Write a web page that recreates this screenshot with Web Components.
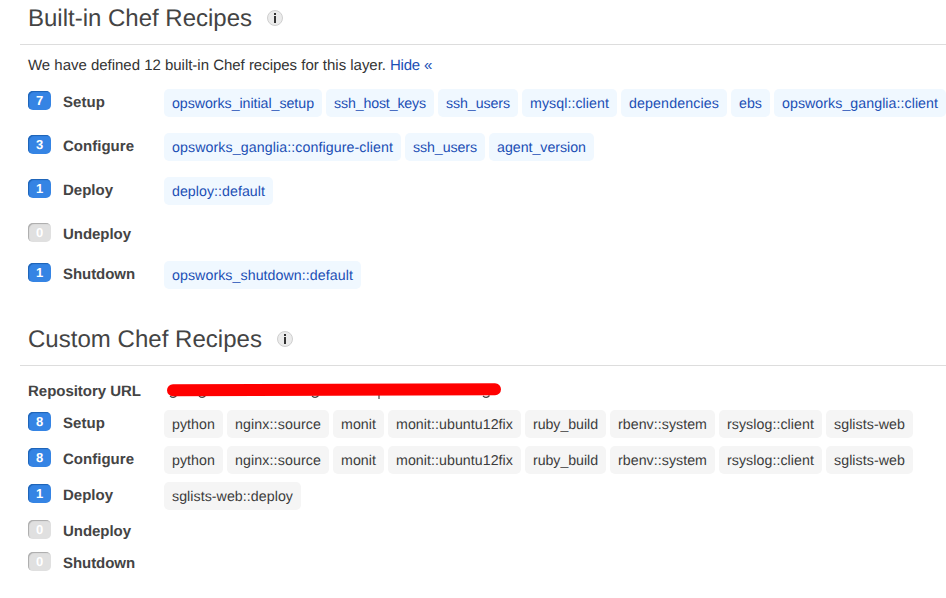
<!DOCTYPE html>
<html lang="en">
<head>
<meta charset="utf-8">
<title>Chef Recipes</title>
<style>
html, body { margin: 0; background: #fff; }
body { width: 946px; height: 598px; overflow: hidden; font-family: "Liberation Sans", Arial, sans-serif; color: #444; text-rendering: geometricPrecision; }
</style>
</head>
<body>
<recipes-page></recipes-page>
<script>
/* Text run that tracks itself out to an exact width. */
class FitText extends HTMLElement {
  connectedCallback() {
    const root = this.attachShadow({ mode: 'open' });
    root.innerHTML = '<style>:host{display:inline-block;white-space:pre}span{display:inline-block}</style><span><slot></slot></span>';
    const width = Number(this.getAttribute('width'));
    const span = root.querySelector('span');
    const count = this.textContent.length;
    this.style.width = width + 'px';
    span.style.letterSpacing = (width - span.getBoundingClientRect().width) / count + 'px';
  }
}
customElements.define('fit-text', FitText);

class InfoIcon extends HTMLElement {
  connectedCallback() {
    this.attachShadow({ mode: 'open' }).innerHTML = `
      <style>:host{display:block;width:16px;height:16px}svg{display:block}</style>
      <svg width="16" height="16" viewBox="0 0 16 16">
        <circle cx="8" cy="8" r="7.5" fill="#ebebeb" stroke="#cfcfcf"/>
        <path d="M7 3h2v2H7zM7 6h2v7H7z" fill="#333"/>
      </svg>`;
  }
}
customElements.define('info-icon', InfoIcon);

class SectionTitle extends HTMLElement {
  connectedCallback() {
    this.attachShadow({ mode: 'open' }).innerHTML = `
      <style>
        :host{display:flex;box-sizing:border-box;height:45px;margin-left:20px;padding:0 0 0 8px;border-bottom:1px solid #ddd;gap:15px;font-size:24px;line-height:38px;color:#444}
        info-icon{margin-top:10px}
      </style>
      <fit-text width="${this.getAttribute('width')}">${this.getAttribute('text')}</fit-text><info-icon></info-icon>`;
  }
}
customElements.define('section-title', SectionTitle);

class CountBadge extends HTMLElement {
  connectedCallback() {
    this.attachShadow({ mode: 'open' }).innerHTML = `
      <style>
        :host{display:block;box-sizing:border-box;width:23px;height:19px;border-radius:5px;background:#3584e4;box-shadow:inset 1px 1px 1px #1d62b4;color:#fff;font:bold 13px/19px "Liberation Sans",Arial,sans-serif;text-align:center}
        :host([empty]){background:#e0e0e0;box-shadow:inset 1px 1px 1px #aaa}
      </style><slot></slot>`;
  }
}
customElements.define('count-badge', CountBadge);

class RecipeChip extends HTMLElement {
  connectedCallback() {
    this.attachShadow({ mode: 'open' }).innerHTML = `
      <style>
        :host{display:block;box-sizing:border-box;flex:none;height:28px;padding:0 8px;border-radius:5px;background:var(--chip-bg);color:var(--chip-fg);font-size:14.2px;line-height:30px}
      </style>
      <fit-text width="${this.getAttribute('width') - 16}">${this.getAttribute('name')}</fit-text>`;
  }
}
customElements.define('recipe-chip', RecipeChip);

class RecipeRow extends HTMLElement {
  connectedCallback() {
    const n = this.getAttribute('count');
    this.attachShadow({ mode: 'open' }).innerHTML = `
      <style>
        :host{display:grid;grid-template-columns:35px 101px auto;padding-left:28px;align-items:start}
        count-badge{margin-top:2px}
        .label{font-weight:bold;font-size:15px;line-height:28px;color:#444}
        .chips{display:flex;gap:4px}
      </style>
      <count-badge ${n === '0' ? 'empty' : ''}>${n}</count-badge>
      <div class="label"><fit-text width="${this.getAttribute('label-width')}">${this.getAttribute('label')}</fit-text></div>
      <div class="chips"><slot></slot></div>`;
  }
}
customElements.define('recipe-row', RecipeRow);

/* Repository value struck out with a thick marker line. */
class RedactedValue extends HTMLElement {
  connectedCallback() {
    this.attachShadow({ mode: 'open' }).innerHTML = `
      <style>:host{display:block}svg{display:block}</style>
      <svg width="338" height="20" viewBox="0 0 338 20">
        <path d="M5 15q3.500 3 6.500-.5M34 15q3.500 3 6.500-.5M147 15q3.500 3 6.500-.5M318 15q3.500 3 6.500-.5M214 14v4" fill="none" stroke="#444" stroke-width="1.2"/>
        <path d="M8 9.200L330 8.300" stroke="#f00" stroke-width="12" stroke-linecap="round"/>
      </svg>`;
  }
}
customElements.define('redacted-value', RedactedValue);

const LABELS = { Setup: 42, Configure: 71, Deploy: 50, Undeploy: 68, Shutdown: 72 };
const row = (label, height, chips) =>
  `<recipe-row style="height:${height}px" count="${chips.length}" label="${label}" label-width="${LABELS[label]}">${
    chips.map(([name, width]) => `<recipe-chip name="${name}" width="${width}"></recipe-chip>`).join('')}</recipe-row>`;
const custom = [['python', 59], ['nginx::source', 102], ['monit', 51], ['monit::ubuntu12fix', 133],
  ['ruby_build', 81], ['rbenv::system', 105], ['rsyslog::client', 103], ['sglists-web', 87]];

class RecipesPage extends HTMLElement {
  connectedCallback() {
    this.attachShadow({ mode: 'open' }).innerHTML = `
      <style>
        :host{display:block}
        .builtin{--chip-bg:#f0f8ff;--chip-fg:#1b4fb5;height:321px}
        .custom{--chip-bg:#f5f5f5;--chip-fg:#3c3c3c}
        .intro{display:flex;gap:4px;height:44px;padding-left:28px;font-size:15px;line-height:42px;color:#333}
        .intro a{color:#1b4fb5}
        .repo{display:grid;grid-template-columns:137px auto;height:44px;padding-left:28px;font-size:15px;line-height:52px;font-weight:bold}
        redacted-value{margin-top:15px}
      </style>
      <section class="builtin">
        <section-title width="224" text="Built-in Chef Recipes"></section-title>
        <div class="intro"><fit-text width="358">We have defined 12 built-in Chef recipes for this layer.</fit-text><a><fit-text width="42">Hide «</fit-text></a></div>
        ${row('Setup', 44, [['opsworks_initial_setup', 158], ['ssh_host_keys', 108], ['ssh_users', 80], ['mysql::client', 95], ['dependencies', 106], ['ebs', 39], ['opsworks_ganglia::client', 172]])}
        ${row('Configure', 44, [['opsworks_ganglia::configure-client', 237], ['ssh_users', 80], ['agent_version', 105]])}
        ${row('Deploy', 44, [['deploy::default', 109]])}
        ${row('Undeploy', 40, [])}
        ${row('Shutdown', 40, [['opsworks_shutdown::default', 197]])}
      </section>
      <section class="custom">
        <section-title width="234" text="Custom Chef Recipes"></section-title>
        <div class="repo"><fit-text width="113">Repository URL</fit-text><redacted-value></redacted-value></div>
        ${row('Setup', 36, custom)}
        ${row('Configure', 36, custom)}
        ${row('Deploy', 36, [['sglists-web::deploy', 137]])}
        ${row('Undeploy', 32, [])}
        ${row('Shutdown', 32, [])}
      </section>`;
  }
}
customElements.define('recipes-page', RecipesPage);
</script>
</body>
</html>
